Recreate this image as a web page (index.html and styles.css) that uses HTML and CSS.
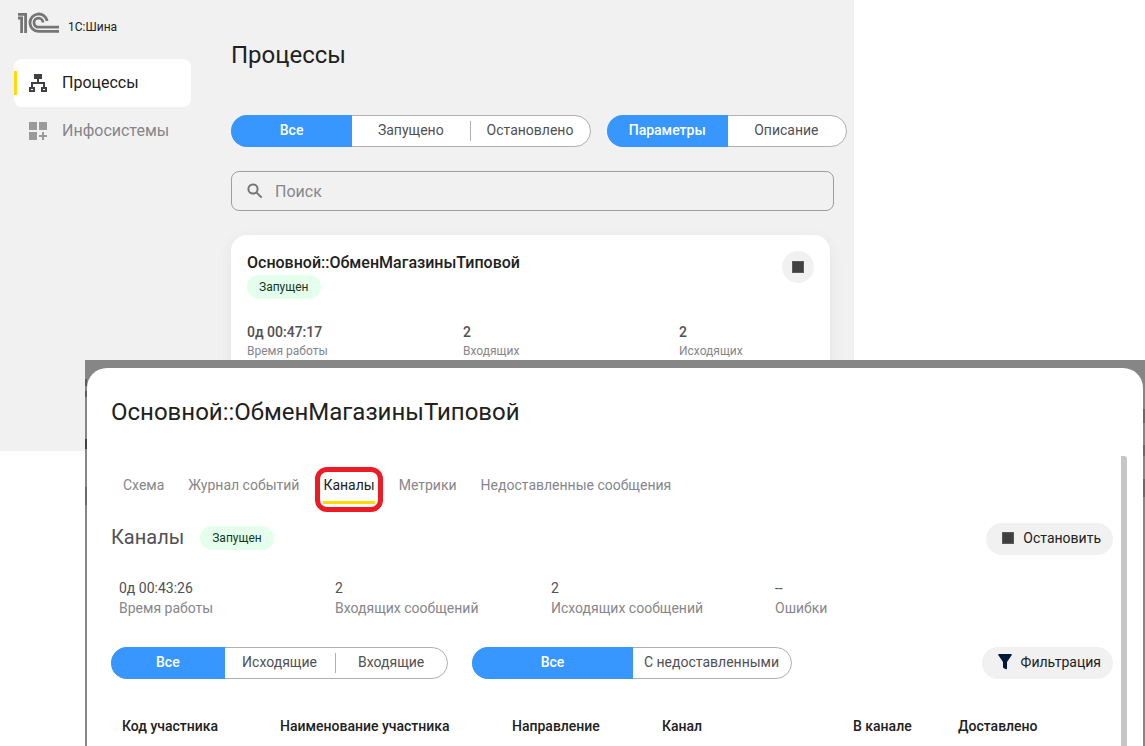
FILE: index.html
```html
<!DOCTYPE html>
<html lang="ru">
<head>
  <meta charset="UTF-8" />
  <meta name="viewport" content="width=device-width, initial-scale=1.0"/>
  <title>1С:Шина</title>
  <link rel="stylesheet" href="styles.css">
</head>
<body>
  <div class="app">
    <aside class="sidebar">
      <div class="brand">
        <svg class="logo" width="42" height="22" viewBox="0 0 42 22" fill="none" stroke="#757575" stroke-width="2.8">
          <path d="M0 6h3.600V21M0 2.400h7.600V21" />
          <path d="M29.200 9A8.700 8.700 0 1 0 20.500 19.400H41" />
          <path d="M25 10.500A4.500 4.500 0 1 0 20.500 15.200H41" />
        </svg>
        <span>1С:Шина</span>
      </div>
      <nav class="menu">
        <a class="menu-item active" href="#">
          <svg width="18" height="18" viewBox="0 0 18 18" fill="#404040">
            <path d="M5 0h8v5H5zM8 5h2v3h6v5h-2v-3H4v3H2V8h6z" />
            <path fill-rule="evenodd" d="M0 13h6v5H0zM2 15v1h2v-1zM12 13h6v5h-6zM14 15v1h2v-1z" />
          </svg>
          <span>Процессы</span>
        </a>
        <a class="menu-item" href="#">
          <svg width="18" height="18" viewBox="0 0 18 18" fill="#9a9a9a">
            <path d="M0 0h8v8H0zM10 0h8v8h-8zM0 10h8v8H0zM13 10h2v3h3v2h-3v3h-2v-3h-3v-2h3z" />
          </svg>
          <span>Инфосистемы</span>
        </a>
      </nav>
    </aside>

    <main class="content">
      <h1>Процессы</h1>
      <div class="filters">
        <div class="segmented wide">
          <button class="on">Все</button>
          <button>Запущено</button>
          <button>Остановлено</button>
        </div>
        <div class="segmented half">
          <button class="on">Параметры</button>
          <button>Описание</button>
        </div>
      </div>
      <label class="search">
        <svg width="16" height="16" viewBox="0 0 16 16" fill="none" stroke="#757575" stroke-width="2">
          <circle cx="6" cy="6" r="4.6" />
          <path d="M9.4 9.4L14.6 14.6" />
        </svg>
        <input type="search" placeholder="Поиск" aria-label="Поиск">
      </label>
      <section class="card">
        <div class="card-head">
          <div>
            <h2>Основной::ОбменМагазиныТиповой</h2>
            <span class="badge">Запущен</span>
          </div>
          <button class="round" aria-label="Остановить"><span class="stop"></span></button>
        </div>
        <dl class="stats">
          <div><dt>0д 00:47:17</dt><dd>Время работы</dd></div>
          <div><dt>2</dt><dd>Входящих</dd></div>
          <div><dt>2</dt><dd>Исходящих</dd></div>
        </dl>
      </section>
    </main>
  </div>

  <div class="overlay">
    <div class="dialog">
      <h2 class="dialog-title">Основной::ОбменМагазиныТиповой</h2>
      <div class="dialog-body">
        <nav class="tabs">
          <a href="#">Схема</a>
          <a href="#">Журнал событий</a>
          <a class="current" href="#">Каналы</a>
          <a href="#">Метрики</a>
          <a href="#">Недоставленные сообщения</a>
        </nav>

        <div class="row channel-head">
          <h3>Каналы</h3>
          <span class="badge">Запущен</span>
          <button class="pill"><span class="stop"></span>Остановить</button>
        </div>

        <dl class="stats channel-stats">
          <div><dt>0д 00:43:26</dt><dd>Время работы</dd></div>
          <div><dt>2</dt><dd>Входящих сообщений</dd></div>
          <div><dt>2</dt><dd>Исходящих сообщений</dd></div>
          <div><dt>--</dt><dd>Ошибки</dd></div>
        </dl>

        <div class="row channel-filters">
          <div class="segmented direction">
            <button class="on">Все</button>
            <button>Исходящие</button>
            <button>Входящие</button>
          </div>
          <div class="segmented delivery">
            <button class="on">Все</button>
            <button>С недоставленными</button>
          </div>
          <button class="pill">
            <svg width="14" height="16" viewBox="0 0 14 16" fill="#00193b">
              <path d="M1 0h12q1 0 .8 1L9 8v6.500q0 1-1 .8L5.500 14q-.5-.3-.5-1V8L.2 1Q0 0 1 0z" />
            </svg>Фильтрация
          </button>
        </div>

        <table class="channels">
          <thead>
            <tr>
              <th class="col-code">Код участника</th>
              <th class="col-name">Наименование участника</th>
              <th class="col-dir">Направление</th>
              <th>Канал</th>
              <th class="col-in">В канале</th>
              <th class="col-done">Доставлено</th>
            </tr>
          </thead>
        </table>
      </div>
    </div>
  </div>
</body>
</html>
```
FILE: styles.css
```css
* { box-sizing: border-box; }
body {
  margin: 0;
  min-height: 100vh;
  position: relative;
  overflow: hidden;
  background: #fff;
  color: #212121;
  font-family: Roboto, "Liberation Sans", sans-serif;
  font-size: 14px;
  line-height: 20px;
}
h1, h2, h3, dl, dd { margin: 0; font-weight: 400; }
a { color: inherit; text-decoration: none; }
button {
  border: 0;
  padding: 0;
  background: none;
  color: inherit;
  font: inherit;
}

.app {
  display: flex;
  margin-right: 291px;
  height: 451px;
  background: #f1f1f1;
  overflow: hidden;
}
.sidebar {
  flex: none;
  width: 191px;
  padding: 12px 0 0 14px;
}
.brand {
  display: flex;
  gap: 8px;
  height: 47px;
  padding-left: 4px;
  font-size: 12px;
}
.brand span { padding-top: 5px; }
.menu-item {
  display: flex;
  align-items: center;
  gap: 15px;
  height: 48px;
  padding-left: 15px;
  border-radius: 8px;
  color: #86868b;
  font-size: 16px;
}
.menu-item.active {
  background: #fff linear-gradient(#ffdb00, #ffdb00) no-repeat left center / 3px 24px;
  color: #212121;
}

.content {
  flex: 1;
  min-width: 0;
  padding: 40px 7px 0 40px;
}
h1 {
  font-size: 24px;
  line-height: 30px;
}
.filters {
  display: flex;
  gap: 16px;
  margin-top: 45px;
}
.segmented {
  display: grid;
  height: 32px;
  border: 1px solid #b0b0b0;
  border-radius: 16px;
  background: #fff;
  color: #505055;
}
.segmented button {
  margin: -1px 0;
  padding-bottom: 2px;
}
.segmented .on {
  margin-left: -1px;
  margin-right: -1px;
  border-radius: 16px 0 0 16px;
  background: #3897ff;
  color: #fff;
  font-weight: 500;
}
.segmented button:nth-child(3) {
  background: linear-gradient(#b0b0b0, #b0b0b0) no-repeat left center / 1px 20px;
}
.wide { flex: 3; grid-template-columns: repeat(3, 1fr); }
.half { flex: 2; grid-template-columns: repeat(2, 1fr); }

.search {
  display: flex;
  align-items: center;
  gap: 12px;
  height: 40px;
  margin: 24px 13px 24px 0;
  padding: 0 15px;
  border: 1px solid #9e9e9e;
  border-radius: 8px;
}
.search input {
  flex: 1;
  border: 0;
  padding: 2px 0 0;
  background: none;
  outline: 0;
  font: 16px/20px Roboto, "Liberation Sans", sans-serif;
}
.search input::placeholder { color: #86868b; }

.card {
  height: 240px;
  margin-right: 17px;
  padding: 16px;
  border-radius: 16px;
  background: #fff;
  box-shadow: 0 4px 16px rgba(0, 0, 0, .06);
}
.card-head {
  display: flex;
  justify-content: space-between;
}
.card h2 {
  font-size: 16px;
  line-height: 24px;
  font-weight: 500;
}
.badge {
  display: inline-block;
  height: 24px;
  padding: 0 12px;
  border-radius: 12px;
  background: #e4ffeb;
  color: #14361d;
  font-size: 12px;
  line-height: 24px;
}
.round {
  display: grid;
  place-items: center;
  width: 32px;
  height: 32px;
  border-radius: 50%;
  background: #f1f1f1;
}
.stop {
  width: 12px;
  height: 12px;
  border: 1px solid #5a5a5a;
  background: #404040;
}
.stats {
  display: flex;
  margin-top: 23px;
}
.stats div { flex: none; width: 216px; }
.card .stats div:last-child { width: auto; }
.stats dt { color: #505055; font-weight: 500; }
.stats dd {
  color: #86868b;
  font-size: 12px;
  line-height: 18px;
}

/* dialog over the process list, with bits of the dimmed page at its sides */
.overlay {
  position: absolute;
  top: 360px;
  right: 0;
  bottom: 0;
  left: 85px;
  padding: 8px 2px 0;
  background:
    linear-gradient(#5c5c5c, #5c5c5c) no-repeat left 19px / 2px 7px,
    linear-gradient(#5c5c5c, #5c5c5c) no-repeat left 31px / 2px 6px,
    linear-gradient(#404040, #404040) no-repeat left 79px / 2px 10px,
    linear-gradient(#6a6a6a, #6a6a6a) no-repeat left 127px / 2px 18px,
    linear-gradient(#6a6a6a, #6a6a6a) no-repeat right 49px / 2px 14px,
    linear-gradient(#6a6a6a, #6a6a6a) no-repeat right 85px / 2px 11px,
    linear-gradient(#6a6a6a, #6a6a6a) no-repeat right 119px / 2px 18px,
    #868686;
}
.dialog {
  height: 100%;
  padding: 28px 16px 0 24px;
  border-radius: 20px 20px 0 0;
  background: #fff;
  overflow: hidden;
}
.dialog-title {
  font-size: 24px;
  line-height: 32px;
}
.dialog-body {
  height: 400px;
  margin-top: 28px;
  padding-right: 8px;
  border-right: 6px solid #c6c6c6;
  border-radius: 3px;
}
.tabs {
  display: flex;
  gap: 8px;
  padding-top: 11px;
  color: #86868b;
}
.tabs a {
  padding: 3px 8px 12px;
  border: 5px solid transparent;
  margin: 0 -5px;
}
.tabs a:first-child { margin-left: -1px; }
.tabs .current {
  padding: 3px 3px 12px;
  margin: 0;
  border-color: #ed1c24;
  border-radius: 12px;
  background: linear-gradient(#ffdb00, #ffdb00) no-repeat center 29px / calc(100% - 6px) 3px;
  color: #212121;
}
.row {
  display: flex;
  align-items: center;
  height: 32px;
}
.row .pill { margin-left: auto; }
.channel-head { margin-top: 11px; }
.channel-head .badge { margin-bottom: 2px; }
h3 {
  margin-right: 16px;
  padding-bottom: 4px;
  color: #505055;
  font-size: 20px;
  line-height: 24px;
}
.pill {
  display: flex;
  align-items: center;
  gap: 9px;
  height: 32px;
  padding: 0 12px 2px 16px;
  border-radius: 16px;
  background: #f1f1f1;
}
.channel-stats { padding-left: 8px; }
.channel-stats div:nth-child(3) { width: 224px; }
.channel-stats dt { font-weight: 400; }
.channel-stats dd { font-size: 14px; line-height: 20px; }
.channel-filters { margin-top: 29px; gap: 24px; }
.direction { width: 337px; grid-template-columns: repeat(3, 1fr); }
.delivery { width: 320px; grid-template-columns: repeat(2, 1fr); }

.channels {
  width: 100%;
  margin-top: 37px;
  border-collapse: collapse;
  table-layout: fixed;
}
.channels th {
  padding: 0 0 0 11px;
  font-weight: 500;
  text-align: left;
}
.col-code { width: 158px; }
.col-name { width: 232px; }
.col-dir { width: 150px; }
.col-in { width: 105px; }
.col-done { width: 166px; }
```
